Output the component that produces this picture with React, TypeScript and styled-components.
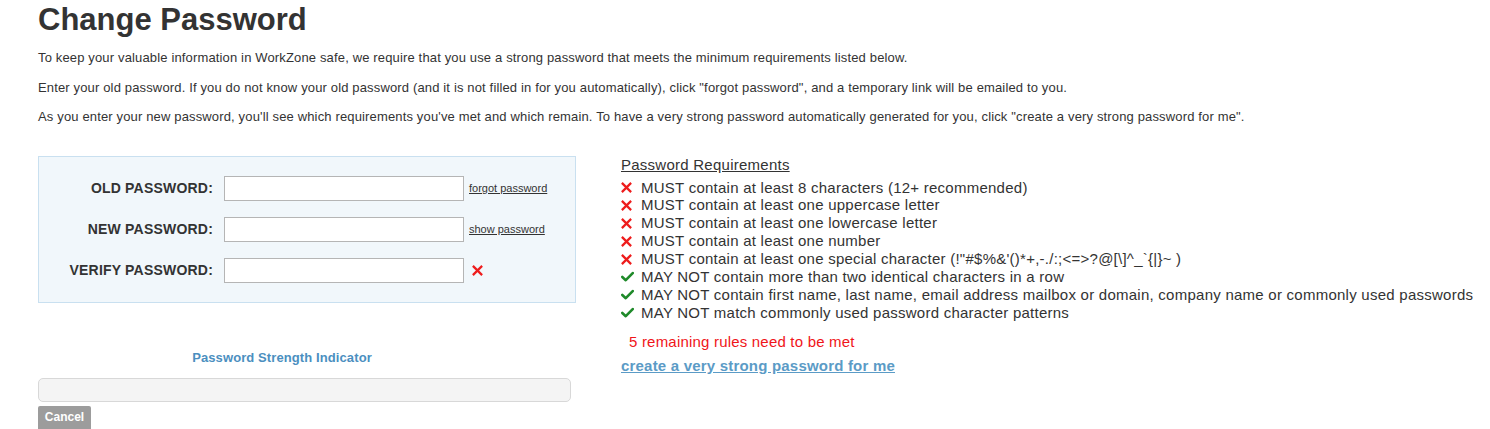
import React from "react";
import styled, { createGlobalStyle } from "styled-components";

const Global = createGlobalStyle`
  html, body { margin: 0; padding: 0; background: #fff; }
  body { font-family: "Liberation Sans", Arial, sans-serif; color: #333; }
`;

const Page = styled.div`
  padding: 0 0 0 38px;
  width: 1452px;
  box-sizing: border-box;
`;

const Title = styled.h1`
  margin: 0;
  padding-top: 2px;
  font-size: 31px;
  line-height: 36px;
  font-weight: bold;
  color: #333;
`;

const Intro = styled.p`
  margin: 0;
  font-size: 13px;
  letter-spacing: 0.15px;
  line-height: 29.5px;
  color: #333;
`;

const IntroBlock = styled.div`
  margin-top: 5px;
`;

const Columns = styled.div`
  display: flex;
  margin-top: 24px;
`;

const LeftCol = styled.div`
  width: 538px;
  display: flex;
  flex-direction: column;
`;

const FormBox = styled.div`
  box-sizing: border-box;
  width: 538px;
  height: 147px;
  background: #f1f7fb;
  border: 1px solid #c9e0f0;
  padding: 19px 0 0 0;
  display: flex;
  flex-direction: column;
  gap: 16px;
`;

const Row = styled.div`
  display: flex;
  align-items: center;
  height: 25px;
`;

const Label = styled.label`
  width: 174px;
  text-align: right;
  font-size: 14px;
  letter-spacing: 0.2px;
  font-weight: bold;
  color: #333;
  padding-right: 11px;
`;

const Input = styled.input`
  box-sizing: border-box;
  width: 240px;
  height: 25px;
  border: 1px solid #b5b5b5;
  background: #fff;
  margin: 0;
`;

const SmallLink = styled.a`
  margin-left: 5px;
  font-size: 11px;
  color: #333;
  text-decoration: underline;
`;

const XIcon = ({ size = 11 }: { size?: number }) => (
  <svg width={size} height={size} viewBox="0 0 10 10">
    <path d="M1.5 1.5 L8.5 8.5 M8.5 1.5 L1.5 8.5" stroke="#ee1c1c" strokeWidth="2" strokeLinecap="square" />
  </svg>
);

const CheckIcon = () => (
  <svg width="13" height="11" viewBox="0 0 12 10">
    <path d="M1.2 5.4 L4.4 8.4 L10.8 1.8" stroke="#1f8a2a" strokeWidth="2.4" fill="none" strokeLinecap="round" strokeLinejoin="round" />
  </svg>
);

const ErrMark = styled.span`
  margin-left: 8px;
  display: inline-flex;
`;

const StrengthTitle = styled.div`
  margin-top: 47px;
  text-align: center;
  font-size: 13px;
  letter-spacing: 0.1px;
  font-weight: bold;
  color: #4b8fbf;
  width: 488px;
`;

const StrengthBar = styled.div`
  box-sizing: border-box;
  margin-top: 13px;
  width: 533px;
  height: 24px;
  border: 1px solid #d8d8d8;
  border-radius: 5px;
  background: #f4f4f4;
`;

const CancelButton = styled.button`
  margin-top: 4px;
  width: 53px;
  height: 23px;
  padding: 0;
  border: none;
  border-radius: 2px 2px 0 0;
  background: #9c9c9c;
  color: #fff;
  font-family: "Liberation Sans", Arial, sans-serif;
  font-size: 12px;
  font-weight: bold;
  text-align: center;
`;

const RightCol = styled.div`
  margin-left: 45px;
`;

const ReqTitle = styled.div`
  font-size: 15px;
  letter-spacing: 0.25px;
  text-decoration: underline;
  color: #333;
  line-height: 18px;
`;

const ReqList = styled.ul`
  list-style: none;
  margin: 5px 0 0 0;
  padding: 0;
`;

const ReqItem = styled.li`
  display: flex;
  align-items: center;
  font-size: 15px;
  letter-spacing: 0.25px;
  line-height: 17.9px;
  color: #333;
  white-space: nowrap;
`;

const Icon = styled.span`
  width: 20px;
  display: inline-flex;
  align-items: center;
`;

const Remaining = styled.div`
  margin-top: 11px;
  margin-left: 8px;
  font-size: 15px;
  letter-spacing: 0.2px;
  color: #f0151a;
  line-height: 18px;
`;

const CreateLink = styled.a`
  display: block;
  margin-top: 6px;
  font-size: 15px;
  letter-spacing: 0.2px;
  font-weight: bold;
  color: #5b9bc6;
  text-decoration: underline;
  line-height: 18px;
`;

const reqs: { ok: boolean; text: string }[] = [
  { ok: false, text: "MUST contain at least 8 characters (12+ recommended)" },
  { ok: false, text: "MUST contain at least one uppercase letter" },
  { ok: false, text: "MUST contain at least one lowercase letter" },
  { ok: false, text: "MUST contain at least one number" },
  { ok: false, text: "MUST contain at least one special character (!\"#$%&'()*+,-./:;<=>?@[\\]^_`{|}~ )" },
  { ok: true, text: "MAY NOT contain more than two identical characters in a row" },
  { ok: true, text: "MAY NOT contain first name, last name, email address mailbox or domain, company name or commonly used passwords" },
  { ok: true, text: "MAY NOT match commonly used password character patterns" },
];

export default function App() {
  return (
    <>
      <Global />
      <Page>
        <Title>Change Password</Title>
        <IntroBlock>
          <Intro>To keep your valuable information in WorkZone safe, we require that you use a strong password that meets the minimum requirements listed below.</Intro>
          <Intro>Enter your old password. If you do not know your old password (and it is not filled in for you automatically), click "forgot password", and a temporary link will be emailed to you.</Intro>
          <Intro>As you enter your new password, you'll see which requirements you've met and which remain. To have a very strong password automatically generated for you, click "create a very strong password for me".</Intro>
        </IntroBlock>
        <Columns>
          <LeftCol>
            <FormBox>
              <Row>
                <Label>OLD PASSWORD:</Label>
                <Input type="password" />
                <SmallLink href="#">forgot password</SmallLink>
              </Row>
              <Row>
                <Label>NEW PASSWORD:</Label>
                <Input type="password" />
                <SmallLink href="#">show password</SmallLink>
              </Row>
              <Row>
                <Label>VERIFY PASSWORD:</Label>
                <Input type="password" />
                <ErrMark><XIcon size={11} /></ErrMark>
              </Row>
            </FormBox>
            <StrengthTitle>Password Strength Indicator</StrengthTitle>
            <StrengthBar />
            <div>
              <CancelButton>Cancel</CancelButton>
            </div>
          </LeftCol>
          <RightCol>
            <ReqTitle>Password Requirements</ReqTitle>
            <ReqList>
              {reqs.map((r, i) => (
                <ReqItem key={i}>
                  <Icon>{r.ok ? <CheckIcon /> : <XIcon size={11} />}</Icon>
                  {r.text}
                </ReqItem>
              ))}
            </ReqList>
            <Remaining>5 remaining rules need to be met</Remaining>
            <CreateLink href="#">create a very strong password for me</CreateLink>
          </RightCol>
        </Columns>
      </Page>
    </>
  );
}
